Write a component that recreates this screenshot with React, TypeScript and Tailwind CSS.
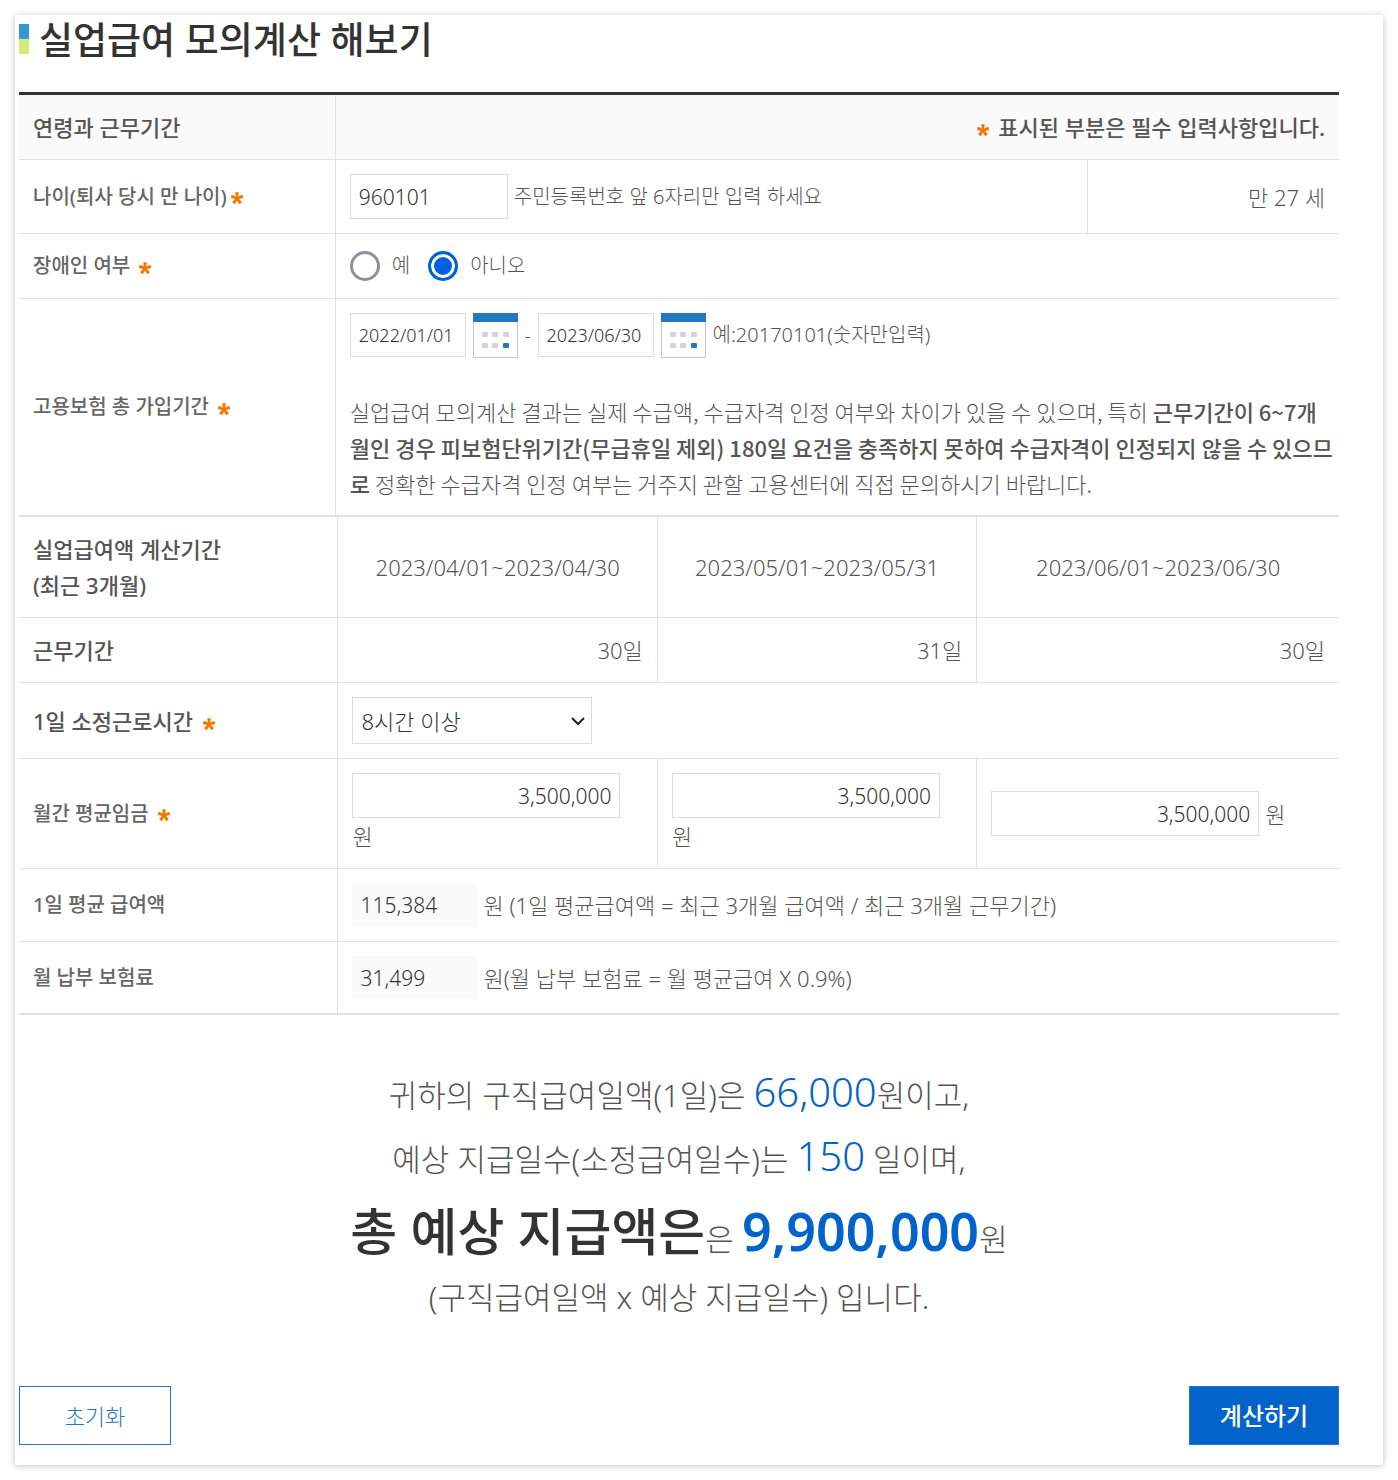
import React, { useState } from "react";

function Required() {
  return (
    <svg className="mx-1 inline-block size-3 shrink-0" viewBox="0 0 12 12" role="img" aria-label="필수">
      <g fill="#f57600">
        {[0, 72, 144, 216, 288].map((a) => (
          <path key={a} d="M4.9 6.6 L4.3 0.2 L7.7 0.2 L7.1 6.6 Z" transform={`rotate(${a} 6 6.3)`} />
        ))}
      </g>
    </svg>
  );
}

function CalendarButton({ label }: { label: string }) {
  return (
    <button type="button" aria-label={label} className="h-11 w-[45px] shrink-0">
      <svg viewBox="0 0 45 45" className="h-[45px] w-[45px]">
        <rect x="0.5" y="0.5" width="44" height="44" fill="#fff" stroke="#c8c8c8" />
        <rect width="45" height="9" fill="#2677c2" />
        {[9, 19, 30].map((x) => (
          <rect key={x} x={x} y="19" width="6" height="5" rx="1" fill="#d4d4d4" />
        ))}
        <rect x="9" y="30" width="6" height="5" rx="1" fill="#d4d4d4" />
        <rect x="19" y="30" width="6" height="5" rx="1" fill="#d4d4d4" />
        <rect x="30" y="30" width="6" height="5" rx="1" fill="#2677c2" />
      </svg>
    </button>
  );
}

const th = "border-r border-b border-[#e2e2e2] px-3.5 py-3.5 text-left align-middle font-medium";
const td = "border-b border-[#e2e2e2] px-3.5 py-3.5 align-middle";
const tdLine = "border-r border-b border-[#e2e2e2] px-3.5 py-3.5 align-middle";
const field = "border border-[#dcdcdc] bg-white px-2 text-[#333] font-light outline-none";
const radio =
  "size-[30px] shrink-0 appearance-none rounded-full border-3 border-[#8f8f9d] bg-white checked:border-[#0060df] checked:bg-[#0060df] checked:shadow-[inset_0_0_0_3px_#fff]";

export default function App() {
  const [birth, setBirth] = useState("960101");
  const [from, setFrom] = useState("2022/01/01");
  const [to, setTo] = useState("2023/06/30");
  const [wages, setWages] = useState(["3,500,000", "3,500,000", "3,500,000"]);
  const setWage = (i: number, v: string) => setWages(wages.map((w, n) => (n === i ? v : w)));

  return (
    <div className="bg-white p-[15px] font-['Noto_Sans','Noto_Sans_CJK_KR',sans-serif] text-[22px] leading-9 font-light text-[#555]">
      <main className="rounded-xs bg-white pr-11 pb-5 pl-1 shadow-[0_1px_6px_rgba(0,0,0,0.25)]">
        <header className="flex h-[77px] items-start gap-2.5 pt-[9px]">
          <span className="w-2.5 shrink-0" aria-hidden="true">
            <span className="block h-[15px] bg-[#3097d1]" />
            <span className="block h-[15px] bg-[#d6eb77]" />
          </span>
          <h1 className="text-[37px] leading-8 font-medium text-[#333]">실업급여 모의계산 해보기</h1>
        </header>

        <table className="w-full table-fixed border-separate border-spacing-0 border-t-3 border-[#333]">
          <colgroup>
            <col className="w-[24%]" />
            <col />
            <col className="w-[19%]" />
          </colgroup>
          <tbody>
            <tr className="bg-[#fafafa]">
              <th scope="row" className={th}>연령과 근무기간</th>
              <td colSpan={2} className={`${td} text-right font-medium`}>
                <Required /> 표시된 부분은 필수 입력사항입니다.
              </td>
            </tr>
            <tr>
              <th scope="row" className={`${th} text-[20px] text-[#666]`}>
                <label htmlFor="birth">나이(퇴사 당시 만 나이)</label>
                <Required />
              </th>
              <td className={tdLine}>
                <div className="flex items-center gap-1.5 text-[20px]">
                  <input id="birth" className={`${field} h-[45px] w-[158px] text-[21px]`} value={birth} onChange={(e) => setBirth(e.target.value)} />
                  <span>주민등록번호 앞 6자리만 입력 하세요</span>
                </div>
              </td>
              <td className={`${td} text-right`}>만 27 세</td>
            </tr>
            <tr>
              <th scope="row" className={`${th} text-[20px] text-[#666]`}>
                장애인 여부 <Required />
              </th>
              <td colSpan={2} className={td}>
                <div className="flex items-center text-[20px]">
                  <input type="radio" id="yes" name="disabled" className={radio} />
                  <label htmlFor="yes" className="mr-[18px] ml-3">예</label>
                  <input type="radio" id="no" name="disabled" defaultChecked className={radio} />
                  <label htmlFor="no" className="ml-3">아니오</label>
                </div>
              </td>
            </tr>
            <tr>
              <th scope="row" className={`${th} text-[20px] text-[#666]`}>
                고용보험 총 가입기간 <Required />
              </th>
              <td colSpan={2} className="border-b border-[#e2e2e2] py-3.5 pr-1.5 pl-3.5 align-middle">
                <div className="flex h-11 items-center gap-[7px] text-[18px]">
                  <input aria-label="시작일" className={`${field} h-11 w-[116px]`} value={from} onChange={(e) => setFrom(e.target.value)} />
                  <CalendarButton label="시작일 선택" />
                  <span>-</span>
                  <input aria-label="종료일" className={`${field} h-11 w-[116px]`} value={to} onChange={(e) => setTo(e.target.value)} />
                  <CalendarButton label="종료일 선택" />
                  <span className="text-[20px]">예:20170101(숫자만입력)</span>
                </div>
                <p className="mt-9 font-['Noto_Sans_CJK_KR',sans-serif]">
                  실업급여 모의계산 결과는 실제 수급액, 수급자격 인정 여부와 차이가 있을 수 있으며, 특히{" "}
                  <b className="font-medium">
                    근무기간이 6~7개월인 경우 피보험단위기간(무급휴일 제외) 180일 요건을 충족하지 못하여 수급자격이 인정되지 않을 수 있으므로
                  </b>{" "}
                  정확한 수급자격 인정 여부는 거주지 관할 고용센터에 직접 문의하시기 바랍니다.
                </p>
              </td>
            </tr>
          </tbody>
        </table>

        <table className="w-full table-fixed border-separate border-spacing-0 border-y border-[#e2e2e2]">
          <colgroup>
            <col className="w-[24.2%]" />
            <col className="w-[24.2%]" />
            <col className="w-[24.2%]" />
            <col />
          </colgroup>
          <tbody>
            <tr>
              <th scope="row" className={th}>
                실업급여액 계산기간
                <br />
                (최근 3개월)
              </th>
              <td className={`${tdLine} text-center`}>2023/04/01~2023/04/30</td>
              <td className={`${tdLine} text-center`}>2023/05/01~2023/05/31</td>
              <td className={`${td} text-center`}>2023/06/01~2023/06/30</td>
            </tr>
            <tr>
              <th scope="row" className={th}>근무기간</th>
              <td className={`${tdLine} text-right`}>30일</td>
              <td className={`${tdLine} text-right`}>31일</td>
              <td className={`${td} text-right`}>30일</td>
            </tr>
            <tr>
              <th scope="row" className={th}>
                <label htmlFor="hours">1일 소정근로시간</label> <Required />
              </th>
              <td colSpan={3} className={td}>
                <div className="grid w-60">
                  <select id="hours" className={`${field} col-start-1 row-start-1 h-[47px] w-full appearance-none`}>
                    <option>8시간 이상</option>
                  </select>
                  <svg className="pointer-events-none col-start-1 row-start-1 mr-1.5 size-4 self-center justify-self-end" viewBox="0 0 16 16" fill="none" stroke="#222" strokeWidth="2">
                    <path d="M2 5 L8 11 L14 5" />
                  </svg>
                </div>
              </td>
            </tr>
            <tr>
              <th scope="row" className={`${th} text-[20px] text-[#666]`}>
                월간 평균임금 <Required />
              </th>
              {wages.map((w, i) => (
                <td key={i} className={i < 2 ? tdLine : td}>
                  <label className={i < 2 ? "block" : "flex items-center gap-1.5"}>
                    <input
                      aria-label={`${i + 4}월 평균임금`}
                      className={`${field} block h-[45px] w-[268px] text-right text-[21px]`}
                      value={w}
                      onChange={(e) => setWage(i, e.target.value)}
                    />
                    <span>원</span>
                  </label>
                </td>
              ))}
            </tr>
            <tr>
              <th scope="row" className={`${th} text-[20px] text-[#666]`}>
                <label htmlFor="daily">1일 평균 급여액</label>
              </th>
              <td colSpan={3} className={td}>
                <div className="flex items-center gap-1.5">
                  <input id="daily" readOnly value="115,384" className="h-11 w-[125px] bg-[#fafafa] px-2 text-[21px] font-light text-[#333]" />
                  <span>원 (1일 평균급여액 = 최근 3개월 급여액 / 최근 3개월 근무기간)</span>
                </div>
              </td>
            </tr>
            <tr>
              <th scope="row" className={`${th} text-[20px] text-[#666]`}>
                <label htmlFor="premium">월 납부 보험료</label>
              </th>
              <td colSpan={3} className={td}>
                <div className="flex items-center gap-1.5">
                  <input id="premium" readOnly value="31,499" className="h-[43px] w-[125px] bg-[#fafafa] px-2 text-[21px] font-light text-[#333]" />
                  <span>원(월 납부 보험료 = 월 평균급여 X 0.9%)</span>
                </div>
              </td>
            </tr>
          </tbody>
        </table>

        <section className="pt-12 text-center text-[31px] leading-[64px]">
          <p>
            귀하의 구직급여일액(1일)은 <span className="text-[40px] leading-none text-[#0264cb]">66,000</span>원이고,
          </p>
          <p>
            예상 지급일수(소정급여일수)는 <span className="text-[40px] leading-none text-[#0264cb]">150</span> 일이며,
          </p>
          <p className="mt-[14px] leading-[56px]">
            <strong className="text-[51px] leading-none font-medium text-[#333]">총 예상 지급액은</strong>은{" "}
            <strong className="text-[52px] leading-none font-semibold text-[#0264cb]">9,900,000</strong>원
          </p>
          <p className="leading-[60px]">(구직급여일액 x 예상 지급일수) 입니다.</p>
        </section>

        <div className="mt-[59px] flex justify-between">
          <button type="button" className="h-[59px] w-38 border border-[#2677c2] bg-white text-[#2677c2]">초기화</button>
          <button type="button" className="h-[59px] w-[150px] border border-[#2677c2] bg-[#0264cb] text-[24px] font-medium text-white">계산하기</button>
        </div>
      </main>
    </div>
  );
}
